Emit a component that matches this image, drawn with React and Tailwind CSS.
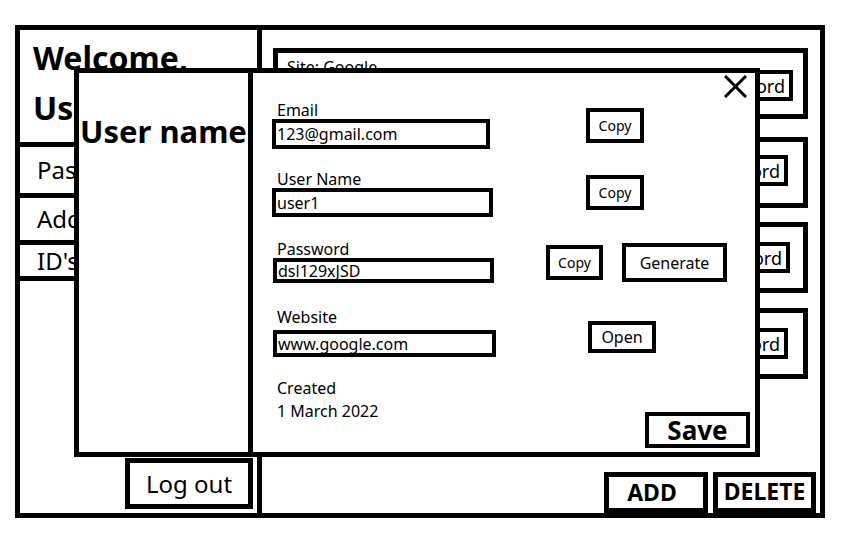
import React from 'react';

const sites = [
  { name: 'Google', mt: 'mt-0', btn: 'mt-[17px] mr-[10px]' },
  { name: 'Facebook', mt: 'mt-[18px]', btn: 'mt-[13px] mr-[15px]' },
  { name: 'Amazon', mt: 'mt-[14px]', btn: 'mt-[15px] mr-[13px]' },
  { name: 'Twitter', mt: 'mt-[15px]', btn: 'mt-[15px] mr-[15px]' },
];

const Box = ({ className = '', children }) => (
  <div className={`border-[4px] border-black flex items-center justify-center ${className}`}>{children}</div>
);

const Field = ({ label, value, className = '', labelClass = 'ml-[5px]', inputClass = '' }) => (
  <div className={className}>
    <div className={`h-[18px] text-[16px] leading-[18px] ${labelClass}`}>{label}</div>
    <div className={`border-[4px] border-black flex items-center pl-[1px] text-[16px] leading-none ${inputClass}`}>
      {value}
    </div>
  </div>
);

export default function App() {
  return (
    <div className="relative w-[864px] h-[540px] bg-white pt-[25px] pl-[15px] text-black font-['Noto_Sans',sans-serif]">
      <div className="w-[810px] h-[493px] border-[5px] border-black flex">
        {/* sidebar */}
        <div className="w-[242px] border-r-[5px] border-black flex flex-col">
          <div className="h-[117px] border-b-[5px] border-black pl-[13px] pt-[3px] text-[32px] font-bold leading-[50px]">
            Welcome, User
          </div>
          <div className="h-[51px] border-b-[5px] border-black flex items-center pl-[17px] text-[24px] leading-none">Passwords</div>
          <div className="h-[47px] border-b-[5px] border-black flex items-center pl-[17px] text-[24px] leading-none">Addresses</div>
          <div className="h-[36px] border-b-[5px] border-black flex items-center pl-[17px] text-[24px] leading-none">ID's</div>
          <div className="flex-1" />
          <Box className="self-end mr-[4px] mb-[4px] w-[128px] h-[51px] border-[5px] text-[24px] leading-none">Log out</Box>
        </div>

        {/* main list */}
        <div className="flex-1 flex flex-col pl-[11px] pt-[18px]">
          {sites.map((s) => (
            <div key={s.name} className={`w-[535px] h-[71px] border-[5px] border-black flex items-start pl-[9px] ${s.mt}`}>
              <span className="mt-[2px] text-[16px] leading-[24px]">Site: {s.name}</span>
              <Box className={`ml-auto h-[31px] pl-[6px] pr-[4px] text-[18px] leading-none ${s.btn}`}>Password</Box>
            </div>
          ))}
          <div className="mt-auto flex justify-end gap-[5px] pr-[4px]">
            <Box className="w-[104px] h-[41px] border-[5px] pr-[8px] text-[23px] font-bold leading-none">ADD</Box>
            <Box className="w-[103px] h-[41px] border-[5px] pb-[3px] text-[23px] font-bold leading-none">DELETE</Box>
          </div>
        </div>
      </div>

      {/* entry modal */}
      <div className="absolute left-[74px] top-[68px] w-[686px] h-[389px] border-[5px] border-black bg-white flex">
        <div className="w-[174px] border-r-[5px] border-black pt-[40px] pl-[1px] text-[31px] font-bold leading-[36px] whitespace-nowrap">
          User name
        </div>
        <div className="relative flex-1 flex flex-col pl-[19px] pt-[28px] pr-[5px]">
          <button className="absolute top-[2px] right-[8px] w-[23px] h-[23px]">
            <svg width="23" height="23" viewBox="0 0 23 23">
              <path d="M1 1L22 22M22 1L1 22" stroke="black" strokeWidth="3" fill="none" />
            </svg>
          </button>

          <div className="flex items-start">
            <Field label="Email" value="123@gmail.com" inputClass="w-[218px] h-[30px]" />
            <Box className="ml-[96px] mt-[7px] w-[58px] h-[35px] text-[14px] leading-none">Copy</Box>
          </div>

          <div className="flex items-start mt-[21px]">
            <Field label="User Name" value="user1" inputClass="w-[221px] h-[29px]" />
            <Box className="ml-[93px] mt-[5px] w-[58px] h-[35px] text-[14px] leading-none">Copy</Box>
          </div>

          <div className="flex items-start mt-[23px]">
            <Field label="Password" value="dsl129xJSD" className="ml-[1px]" labelClass="ml-[4px]" inputClass="w-[221px] h-[25px]" />
            <Box className="ml-[52px] mt-[5px] w-[57px] h-[35px] text-[14px] leading-none">Copy</Box>
            <Box className="ml-[19px] mt-[3px] w-[105px] h-[39px] text-[16px] leading-none">Generate</Box>
          </div>

          <div className="flex items-start mt-[25px]">
            <div className="ml-[1px]">
              <div className="ml-[4px] h-[18px] text-[16px] leading-[18px]">Website</div>
              <div className="mt-[4px] w-[223px] h-[27px] border-[4px] border-black flex items-center pl-[1px] text-[16px] leading-none">
                www.google.com
              </div>
            </div>
            <Box className="ml-[92px] mt-[13px] w-[68px] h-[32px] text-[16px] leading-none">Open</Box>
          </div>

          <div className="flex items-start justify-between mt-[20px]">
            <div className="ml-[5px] text-[16px] leading-[23px]">
              <div>Created</div>
              <div>1 March 2022</div>
            </div>
            <Box className="mt-[35px] w-[105px] h-[36px] text-[26px] font-bold leading-none">Save</Box>
          </div>
        </div>
      </div>
    </div>
  );
}
